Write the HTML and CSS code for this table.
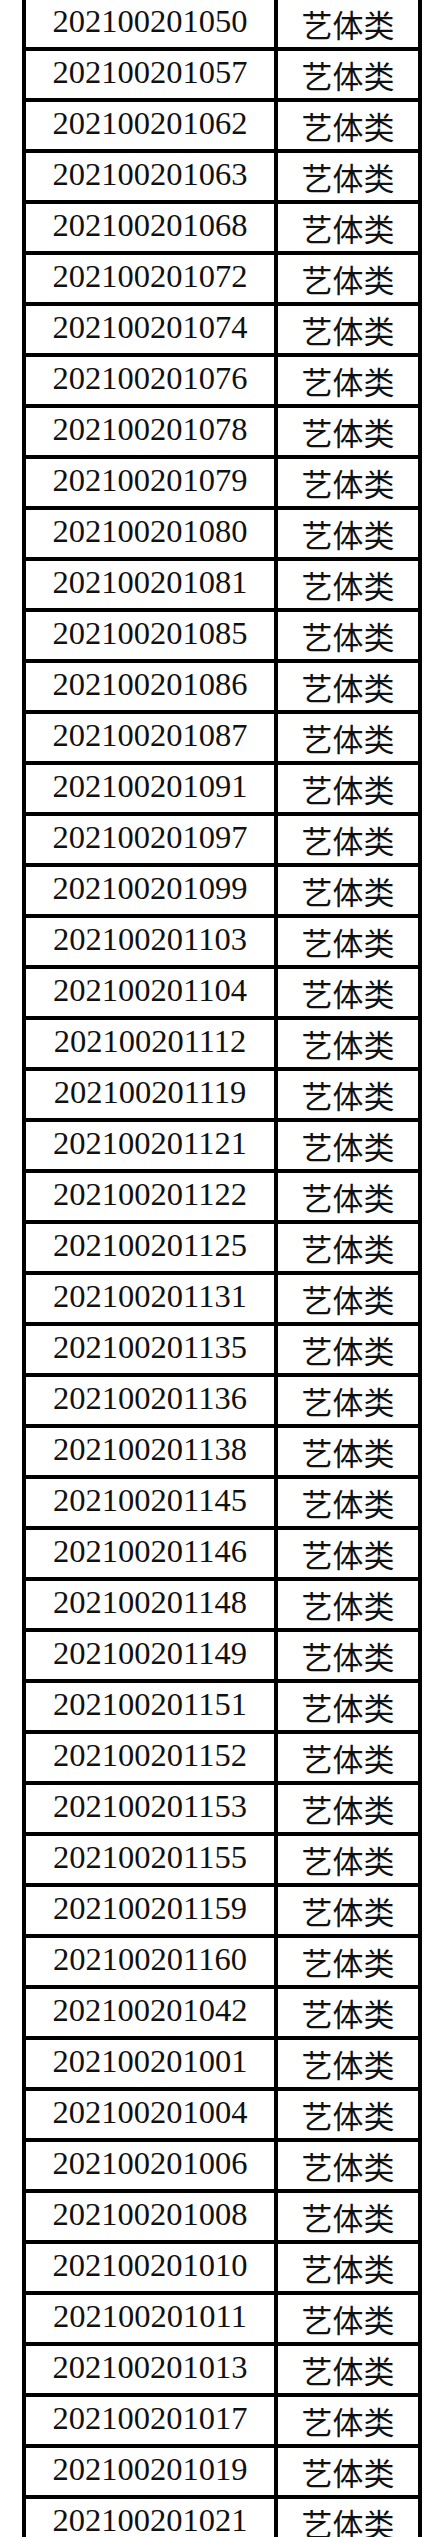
FILE: index.html
```html
<!DOCTYPE html>
<html lang="zh">
<head>
<meta charset="utf-8">
<link rel="stylesheet" href="styles.css">
</head>
<body>
<div class="sheet">
<div class="id">202100201050</div><div class="cat">艺体类</div>
<div class="id">202100201057</div><div class="cat">艺体类</div>
<div class="id">202100201062</div><div class="cat">艺体类</div>
<div class="id">202100201063</div><div class="cat">艺体类</div>
<div class="id">202100201068</div><div class="cat">艺体类</div>
<div class="id">202100201072</div><div class="cat">艺体类</div>
<div class="id">202100201074</div><div class="cat">艺体类</div>
<div class="id">202100201076</div><div class="cat">艺体类</div>
<div class="id">202100201078</div><div class="cat">艺体类</div>
<div class="id">202100201079</div><div class="cat">艺体类</div>
<div class="id">202100201080</div><div class="cat">艺体类</div>
<div class="id">202100201081</div><div class="cat">艺体类</div>
<div class="id">202100201085</div><div class="cat">艺体类</div>
<div class="id">202100201086</div><div class="cat">艺体类</div>
<div class="id">202100201087</div><div class="cat">艺体类</div>
<div class="id">202100201091</div><div class="cat">艺体类</div>
<div class="id">202100201097</div><div class="cat">艺体类</div>
<div class="id">202100201099</div><div class="cat">艺体类</div>
<div class="id">202100201103</div><div class="cat">艺体类</div>
<div class="id">202100201104</div><div class="cat">艺体类</div>
<div class="id">202100201112</div><div class="cat">艺体类</div>
<div class="id">202100201119</div><div class="cat">艺体类</div>
<div class="id">202100201121</div><div class="cat">艺体类</div>
<div class="id">202100201122</div><div class="cat">艺体类</div>
<div class="id">202100201125</div><div class="cat">艺体类</div>
<div class="id">202100201131</div><div class="cat">艺体类</div>
<div class="id">202100201135</div><div class="cat">艺体类</div>
<div class="id">202100201136</div><div class="cat">艺体类</div>
<div class="id">202100201138</div><div class="cat">艺体类</div>
<div class="id">202100201145</div><div class="cat">艺体类</div>
<div class="id">202100201146</div><div class="cat">艺体类</div>
<div class="id">202100201148</div><div class="cat">艺体类</div>
<div class="id">202100201149</div><div class="cat">艺体类</div>
<div class="id">202100201151</div><div class="cat">艺体类</div>
<div class="id">202100201152</div><div class="cat">艺体类</div>
<div class="id">202100201153</div><div class="cat">艺体类</div>
<div class="id">202100201155</div><div class="cat">艺体类</div>
<div class="id">202100201159</div><div class="cat">艺体类</div>
<div class="id">202100201160</div><div class="cat">艺体类</div>
<div class="id">202100201042</div><div class="cat">艺体类</div>
<div class="id">202100201001</div><div class="cat">艺体类</div>
<div class="id">202100201004</div><div class="cat">艺体类</div>
<div class="id">202100201006</div><div class="cat">艺体类</div>
<div class="id">202100201008</div><div class="cat">艺体类</div>
<div class="id">202100201010</div><div class="cat">艺体类</div>
<div class="id">202100201011</div><div class="cat">艺体类</div>
<div class="id">202100201013</div><div class="cat">艺体类</div>
<div class="id">202100201017</div><div class="cat">艺体类</div>
<div class="id">202100201019</div><div class="cat">艺体类</div>
<div class="id">202100201021</div><div class="cat">艺体类</div>
</div>
</body>
</html>
```
FILE: styles.css
```css
html, body {
  margin: 0;
  padding: 0;
  background: #ffffff;
}

body {
  overflow: hidden;
}

.sheet {
  display: grid;
  grid-template-columns: 248px 140px;
  grid-auto-rows: 47px;
  gap: 4px;
  padding: 4px;
  width: max-content;
  background: #000000;
  margin: -4px 0 0 22px;
}

.id,
.cat {
  background: #ffffff;
  color: #111111;
  display: flex;
  align-items: center;
  justify-content: center;
  box-sizing: border-box;
}

.id {
  font-family: "Liberation Serif", "Times New Roman", serif;
  font-size: 32.5px;
  padding-bottom: 4px;
}

.cat {
  font-family: "Noto Sans CJK SC", "Noto Sans", sans-serif;
  font-size: 31px;
  padding-bottom: 1px;
}
```
